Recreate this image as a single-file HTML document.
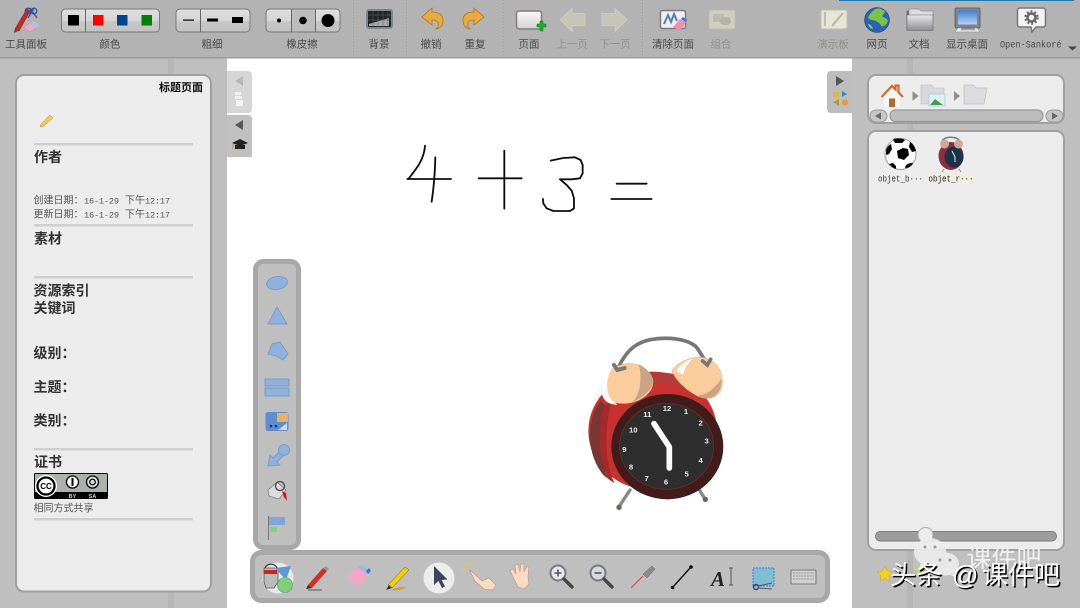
<!DOCTYPE html>
<html><head><meta charset="utf-8"><style>
html,body{margin:0;padding:0;background:#bfbfbf;width:1080px;height:608px;overflow:hidden}
svg{display:block}
text{font-family:"Liberation Sans","WenQuanYi Zen Hei","Noto Sans CJK SC",sans-serif}
.l{font-size:10.5px;fill:#4a4a4a;text-anchor:middle}
.d{font-size:10.5px;fill:#8f8f8a;text-anchor:middle}
.h{font-size:14px;fill:#333;font-weight:bold}
.s{font-size:10px;fill:#555}
.m{font-family:"Liberation Mono",monospace;font-size:8.6px;fill:#555}
.sep{stroke:#999;stroke-width:1;stroke-dasharray:1 2}
.hr{fill:#cfcfcf}
.b{fill:#8fb2dd;stroke:#7a9cc8;stroke-width:1}
</style></head><body>
<svg width="1080" height="608" viewBox="0 0 1080 608" xmlns="http://www.w3.org/2000/svg">
<defs>
<linearGradient id="btn" x1="0" y1="0" x2="0" y2="1"><stop offset="0" stop-color="#dedede"/><stop offset=".5" stop-color="#d6d6d6"/><stop offset=".55" stop-color="#c6c6c6"/><stop offset="1" stop-color="#c2c2c2"/></linearGradient>
<linearGradient id="pg" x1="0" y1="0" x2="0" y2="1"><stop offset="0" stop-color="#fbfbfb"/><stop offset="1" stop-color="#cfcfcf"/></linearGradient>
<linearGradient id="sc" x1="0" y1="0" x2="0" y2="1"><stop offset="0" stop-color="#3f7fd0"/><stop offset="1" stop-color="#b5d4f2"/></linearGradient>
<linearGradient id="fo" x1="0" y1="0" x2="0" y2="1"><stop offset="0" stop-color="#e8e8e8"/><stop offset="1" stop-color="#8c8c94"/></linearGradient>
<filter id="soft" filterUnits="userSpaceOnUse" x="0" y="0" width="1080" height="608"><feGaussianBlur stdDeviation=".38"/></filter>
</defs>

<g filter="url(#soft)">
<rect width="1080" height="608" fill="#bfbfbf"/>
<rect x="168" y="58" width="6" height="17" fill="#b6b6b6"/><rect x="168" y="592" width="6" height="16" fill="#b6b6b6"/>
<rect x="907" y="58" width="6" height="17" fill="#b6b6b6"/><rect x="907" y="123" width="6" height="8" fill="#b6b6b6"/><rect x="907" y="550" width="6" height="58" fill="#b6b6b6"/>

<!-- canvas -->
<rect x="227" y="58" width="625" height="550" fill="#fff"/>

<!-- toolbar -->
<rect width="1080" height="57" fill="#b3b3b3"/>
<rect y="57" width="1080" height="1.5" fill="#9c9c9c"/>
<rect x="839" y="0" width="235" height="1" fill="#1f78a8"/>
<path class="sep" d="M353.500 0V57M406.500 0V57M503 0V57M642.500 0V57"/>

<!-- tool panel icon -->
<path d="M15 29L27 9l3 2-11 20z" fill="#c62b2b" stroke="#7a2020" stroke-width=".6"/>
<path d="M15 29l-1 4 4-2z" fill="#444"/>
<path d="M28 18L34 8M37 18L30 8" stroke="#3a5a9a" stroke-width="1.500" fill="none"/>
<circle cx="28" cy="11" r="2.800" fill="none" stroke="#2f55a0" stroke-width="1.300"/><circle cx="34" cy="11" r="2.800" fill="none" stroke="#2f55a0" stroke-width="1.300"/>
<path d="M24 27l10-6 6 4-10 7z" fill="#eeaacb" stroke="#b98" stroke-width=".5"/>
<path d="M30 23.500l4-2.500 6 4-4 3z" fill="#a9c6df"/>
<text x="26" y="47.500" class="l">工具面板</text>

<!-- colour -->
<rect x="61.500" y="9" width="98" height="23" rx="4" fill="url(#btn)" stroke="#777" stroke-width="1"/>
<path d="M85.500 9V32" stroke="#666"/>
<rect x="68" y="15" width="11" height="10.500" fill="#000"/><rect x="93" y="15" width="10.500" height="10.500" fill="#f00"/><rect x="117" y="15" width="10.500" height="10.500" fill="#004490"/><rect x="141.500" y="15" width="10.500" height="10.500" fill="#008000"/>
<text x="110" y="47.500" class="l">颜色</text>

<!-- line -->
<rect x="176" y="9" width="74" height="23" rx="4" fill="url(#btn)" stroke="#777"/>
<path d="M200.500 9V32" stroke="#666"/>
<rect x="183" y="19.500" width="11" height="1.200" fill="#000"/><rect x="207" y="18.500" width="11" height="3" fill="#000"/><rect x="232" y="17" width="11" height="6" fill="#000"/>
<text x="212" y="47.500" class="l">粗细</text>

<!-- eraser -->
<rect x="266" y="9" width="74" height="23" rx="4" fill="url(#btn)" stroke="#777"/>
<rect x="292" y="9.500" width="23" height="22" fill="#bcbcbc"/>
<path d="M291.500 9V32M315.500 9V32" stroke="#666"/>
<circle cx="279" cy="20.500" r="2" fill="#000"/><circle cx="303" cy="20.500" r="3.800" fill="#000"/><circle cx="328" cy="20.500" r="6.500" fill="#000"/>
<text x="302" y="47.500" class="l">橡皮擦</text>

<!-- background -->
<rect x="367" y="10" width="25" height="18" rx="2" fill="#222" stroke="#7d8590" stroke-width="2"/>
<path d="M369 24l20-6v8h-20z" fill="#aaa"/>
<path d="M373 11v16M378 11v16M383 11v16M388 11v16M368 15h23M368 20h23" stroke="#666" stroke-width=".5"/>
<text x="379" y="47.500" class="l">背景</text>

<!-- undo / redo -->
<g fill="#e8a93c" stroke="#a87820" stroke-width=".8">
<path d="M432 8l-10 9 10 8v-5c5 0 7 2 6 7l-2 2c6-1 7-5 7-9 0-5-4-8-11-8z"/>
<path d="M474 8l10 9-10 8v-5c-5 0-7 2-6 7l2 2c-6-1-7-5-7-9 0-5 4-8 11-8z"/>
</g>
<text x="431" y="47.500" class="l">撤销</text><text x="475" y="47.500" class="l">重复</text>

<!-- page -->
<rect x="516.500" y="11" width="25" height="18" rx="2.500" fill="url(#pg)" stroke="#857a80" stroke-width="1.500"/>
<path d="M537 24h3v-3h3v3h3v3h-3v4h-3v-4h-3z" fill="#1fae2c" stroke="#0f7a18" stroke-width=".5"/>
<text x="529" y="47.500" class="l">页面</text>
<path d="M560 19.500l12-11v5h13v12h-13v6z" fill="#c6c6b8" stroke="#cfcfc4" stroke-width=".8"/>
<path d="M627 19.500l-12-11v5h-13v12h13v6z" fill="#c6c6b8" stroke="#cfcfc4" stroke-width=".8"/>
<text x="572" y="47.500" class="d">上一页</text><text x="615" y="47.500" class="d">下一页</text>

<!-- clear -->
<rect x="660.500" y="10.500" width="25" height="18" rx="2" fill="#eef0f6" stroke="#7d7a80" stroke-width="1.500"/>
<path d="M664 24l4-9 3 7 3-8 3 7" fill="none" stroke="#5a7ab5" stroke-width="2"/>
<path d="M673 27l7-8 6 3-6 9z" fill="#ee8fb8"/><path d="M681 19l2-2 4 3-1 2z" fill="#3f6fd0"/>
<text x="673" y="47.500" class="l">清除页面</text>

<!-- group -->
<rect x="709" y="10" width="26" height="19" rx="2" fill="#cfcfc0" stroke="#bdbdb0"/>
<rect x="713" y="14" width="11" height="8" rx="1" fill="#bcbcae"/><rect x="720" y="17" width="11" height="8" rx="4" fill="#b4b4a6"/>
<text x="721" y="47.500" class="d">组合</text>

<!-- presentation board -->
<rect x="821" y="10" width="26" height="19" rx="2" fill="#e6e6d6" stroke="#c0c0ae"/>
<path d="M825 12v14" stroke="#bbb" stroke-width="2"/><path d="M832 26l11-13" stroke="#b5b5a8" stroke-width="2"/>
<text x="833" y="47.500" class="d">演示板</text>

<!-- globe -->
<circle cx="877" cy="20" r="12.500" fill="#2a62b8" stroke="#1a3a70" stroke-width=".5"/>
<path d="M874 10c4-3 9-1 11 2l-3 4c2 2 5 2 6 5-1 3-4 6-7 5 0-3-3-3-5-5-3-1-6-1-8-3 1-3 3-6 6-8z" fill="#7cc344"/>
<path d="M868 24c2 0 4 2 5 5-2 0-4-2-5-5z" fill="#9ad060"/>
<text x="877" y="47.500" class="l">网页</text>

<!-- folder -->
<path d="M907 11h10l2 2h13v17h-25z" fill="#777" stroke="#555" stroke-width=".6"/>
<path d="M909 9h10l2 2h12v6h-24z" fill="#dcdcdc" stroke="#777" stroke-width=".5"/>
<path d="M907 15h26v15.500h-26z" fill="url(#fo)" stroke="#666" stroke-width=".6"/>
<text x="919" y="47.500" class="l">文档</text>

<!-- desktop -->
<rect x="955" y="8" width="25" height="20" rx="1.500" fill="#7a8490" stroke="#666"/>
<rect x="958" y="10.500" width="19" height="14" fill="url(#sc)"/>
<path d="M958 28l-3 4h25l-3-4h-3l1 2h-14l1-2z" fill="#e8e8e8" stroke="#888" stroke-width=".5"/>
<text x="967" y="47.500" class="l">显示桌面</text>

<!-- open sankore -->
<path d="M1020 8h23a2.500 2.500 0 0 1 2.500 2.500v14a2.500 2.500 0 0 1-2.500 2.500h-7l-4 5-1-5h-11a2.500 2.500 0 0 1-2.500-2.500v-14a2.500 2.500 0 0 1 2.500-2.500z" fill="#f4f4f4" stroke="#777" stroke-width="1.500"/>
<circle cx="1031.500" cy="17.500" r="4" fill="none" stroke="#666" stroke-width="2.500"/>
<circle cx="1031.500" cy="17.500" r="6.200" fill="none" stroke="#666" stroke-width="2" stroke-dasharray="2 2"/>
<text x="1000" y="47.500" textLength="61.500" lengthAdjust="spacingAndGlyphs" style="font-family:'Liberation Mono',monospace;font-size:10px;fill:#4a4a4a">Open-Sankoré</text>
<path d="M1068 46.500h9l-4.500 4z" fill="#444"/>

<!-- left panel -->
<rect x="16" y="75" width="195" height="516.500" rx="8" fill="#ececec" stroke="#a0a0a0" stroke-width="2"/>
<text x="203" y="91" text-anchor="end" style="font-size:11px;font-weight:bold;fill:#111">标题页面</text>
<path d="M40 127l1-3 9-9 3 3-9 8z" fill="#efc65a" stroke="#c99a30" stroke-width=".5"/>
<rect class="hr" x="34" y="143" width="159" height="2.500"/>
<text x="34" y="162" class="h">作者</text>
<text x="33.500" y="203.500" class="s">创建日期：</text><text x="84" y="203.500" class="m" textLength="35">16-1-29</text><text x="125" y="203.500" class="s">下午</text><text x="145" y="203.500" class="m" textLength="25">12:17</text>
<text x="33.500" y="217.500" class="s">更新日期：</text><text x="84" y="217.500" class="m" textLength="35">16-1-29</text><text x="125" y="217.500" class="s">下午</text><text x="145" y="217.500" class="m" textLength="25">12:17</text>
<rect class="hr" x="34" y="224" width="159" height="2.500"/>
<text x="34" y="243.500" class="h">素材</text>
<rect class="hr" x="34" y="276" width="159" height="2.500"/>
<text x="33.500" y="295.500" class="h">资源索引</text>
<text x="33.500" y="313" class="h">关键词</text>
<text x="33.500" y="358" class="h">级别：</text>
<text x="33.500" y="392" class="h">主题：</text>
<text x="33.500" y="425.500" class="h">类别：</text>
<rect class="hr" x="34" y="448" width="159" height="2.500"/>
<text x="34" y="467" class="h">证书</text>
<rect x="34" y="473" width="74" height="26" rx="1.500" fill="#000"/>
<rect x="35" y="474" width="72" height="18" fill="#aab2ab"/>
<circle cx="46" cy="486" r="11" fill="#fff"/><circle cx="46" cy="486" r="8.500" fill="#fff" stroke="#000" stroke-width="2.300"/>
<text x="46" y="489" text-anchor="middle" style="font-size:8px;font-weight:bold;fill:#000">CC</text>
<circle cx="72.500" cy="482" r="6" fill="#fff" stroke="#000" stroke-width="1.300"/><path d="M72.500 478v8" stroke="#000" stroke-width="2"/>
<circle cx="92.500" cy="482" r="6" fill="#ddd" stroke="#000" stroke-width="1.300"/><circle cx="92.500" cy="482" r="2.800" fill="none" stroke="#000" stroke-width="1.200"/>
<text x="72.500" y="498" text-anchor="middle" style="font-size:5.500px;fill:#ccc;font-weight:bold">BY</text>
<text x="92.500" y="498" text-anchor="middle" style="font-size:5.500px;fill:#ccc;font-weight:bold">SA</text>
<text x="33.500" y="511.500" class="s" style="font-size:10px">相同方式共享</text>
<rect class="hr" x="34" y="518" width="159" height="2.500"/>

<!-- side tabs -->
<path d="M227 71h21a4 4 0 0 1 4 4v34a4 4 0 0 1-4 4h-21z" fill="#d6d6d6"/>
<path d="M235 81l8-5v10z" fill="#b8b8b8"/>
<rect x="235" y="92" width="6" height="3" fill="#efefef"/><rect x="235" y="96" width="7" height="3" fill="#efefef"/><rect x="236" y="100" width="7" height="6" fill="#f5f5f5"/>
<path d="M227 115h21a4 4 0 0 1 4 4v38h-25z" fill="#c0c0c0"/>
<path d="M235 125l8-5v10z" fill="#555"/>
<path d="M232 143l8-4 8 4-8 3z" fill="#222"/><path d="M235 145v4h10v-4z" fill="#222"/><path d="M233 144v5" stroke="#c89a20"/>

<path d="M852 71h-21a4 4 0 0 0-4 4v34a4 4 0 0 0 4 4h21z" fill="#bdbdbd"/>
<path d="M836 76l8 5-8 5z" fill="#555"/>
<rect x="833" y="92" width="6" height="5" fill="#e6b530"/><path d="M842 91l5 3-5 3z" fill="#2a8fc0"/>
<path d="M833 102l6-3v7z" fill="#a9a030"/><circle cx="845" cy="102.500" r="3" fill="#e89a30"/>

<!-- right panels -->
<rect x="868" y="75" width="196" height="48" rx="8" fill="#ececec" stroke="#a0a0a0" stroke-width="2"/>
<path d="M884 95l8-8 8 8v12h-16z" fill="#f6f6f6"/>
<rect x="889" y="98.500" width="6" height="8.500" fill="#b06a35"/>
<path d="M881.500 97l10.500-11 3.500 3.500v-4h3v7l4.500 4.500" fill="none" stroke="#d9692a" stroke-width="2.200"/>
<path d="M912.500 91l6 5-6 5z" fill="#8f8f8f"/>
<path d="M921 85h10l3 3h10v16h-23z" fill="#d8d8dc" stroke="#bbb" stroke-width=".6"/>
<rect x="929" y="94" width="16" height="12" fill="#dff0f5" stroke="#a6cfdc" stroke-width=".8"/><path d="M930 105l5-6 4 3 4 3z" fill="#4c9a50"/>
<path d="M954 91l6 5-6 5z" fill="#8f8f8f"/>
<path d="M964 85h9l3 3h11l-3 16h-20z" fill="#dcdce0" stroke="#bbb" stroke-width=".7"/>
<rect x="870" y="110" width="17" height="12" rx="6" fill="#c6c6c6" stroke="#999"/><path d="M875 116l6-3.500v7z" fill="#666"/>
<rect x="890" y="110" width="153" height="11.500" rx="5.500" fill="#bdbdbd" stroke="#999" stroke-width="1.200"/>
<rect x="1046" y="110" width="17" height="12" rx="6" fill="#c6c6c6" stroke="#999"/><path d="M1058 116l-6-3.500v7z" fill="#666"/>

<rect x="868" y="131" width="196" height="419" rx="8" fill="#ececec" stroke="#a0a0a0" stroke-width="2"/>

<!-- soccer -->
<circle cx="900.500" cy="154" r="15.500" fill="#fff" stroke="#888" stroke-width=".8"/>
<path d="M903 148l-6 3 1 7 6 2 5-5-1-6z" fill="#000"/>
<path d="M886 150c1-3 3-5 5-6l1 5-3 5-3 1z" fill="#000"/><path d="M893 139c4-1 9-1 12 1l-3 3h-7z" fill="#000"/><path d="M910 142c3 2 5 5 6 9l-4 1-3-5z" fill="#000"/><path d="M889 164l4-1 3 3v3c-3-1-5-3-7-5z" fill="#000"/><path d="M905 168l1-3 4-2 3 0c-1 3-4 5-8 5z" fill="#000"/>
<!-- small clock -->
<path d="M942 141c3-5 14-5 18 0" fill="none" stroke="#777" stroke-width="1.400"/>
<path d="M944 169l-2 3M959 169l2 3" stroke="#888" stroke-width="1"/>
<ellipse cx="951" cy="156" rx="12.500" ry="14" fill="#8e2f3c"/>
<ellipse cx="954" cy="157" rx="9.500" ry="10.500" fill="#1e3048"/>
<circle cx="944.500" cy="144" r="4.500" fill="#cda99a"/><circle cx="958.500" cy="144" r="4.500" fill="#cda99a"/>
<path d="M952 151l3 6v5" fill="none" stroke="#cfe" stroke-width="1"/>
<text x="878" y="181.500" textLength="45" lengthAdjust="spacingAndGlyphs" style="font-family:'Liberation Mono',monospace;font-size:9px;fill:#333">objet_b···</text>
<rect x="926" y="173" width="49" height="11" fill="#f0efdf"/>
<text x="928.500" y="181.500" textLength="45" lengthAdjust="spacingAndGlyphs" style="font-family:'Liberation Mono',monospace;font-size:9px;fill:#222">objet_r···</text>

<!-- slider -->
<rect x="875.500" y="531.500" width="181" height="9.500" rx="4.700" fill="#9d9d9d" stroke="#7e7e7e"/>
<circle cx="925.500" cy="535" r="7.500" fill="#ececec" stroke="#aaa"/>

<!-- handwriting -->
<g transform="translate(390 130) scale(.3333)" fill="none" stroke="#111" stroke-width="5.500" stroke-linecap="round" stroke-linejoin="round">
<path d="M105 47C102 90 80 115 55 147M52 147H183M136 82C135 130 131 175 125 215"/>
<path d="M266 145H395M343 62V236"/>
<path d="M482 92L520 84 555 82 572 90 578 105 578 130 570 145 545 148 510 148 530 165 545 182 552 205 552 235 540 243 490 243 470 235 460 220 459 207"/>
<path d="M680 161H770M664 207H785"/>
</g>

<!-- big clock -->
<g transform="translate(570 325) scale(.3333)">
<path d="M180 495l-33 50" stroke="#8a8a80" stroke-width="10" stroke-linecap="round"/><path d="M382 485l25 40" stroke="#8a8a80" stroke-width="10" stroke-linecap="round"/>
<circle cx="147" cy="547" r="8" fill="#666"/><circle cx="406" cy="523" r="8" fill="#666"/>
<ellipse cx="248" cy="318" rx="193" ry="178" fill="#c8302f"/>
<path d="M92 228C50 280 45 380 100 450l15 12C80 380 85 300 105 240z" fill="#7a3535"/>
<path d="M105 240C85 300 80 380 115 462l18 12C100 400 105 300 125 230z" fill="#a52a2a"/>
<path d="M200 150c50-12 120-12 170 18l-20 22c-50-22-110-22-150-12z" fill="#b03a3a"/>
<ellipse cx="292" cy="365" rx="168" ry="158" fill="#431c1c"/>
<ellipse cx="290" cy="364" rx="141" ry="129" fill="#2f2f2f" stroke="#7a3020" stroke-width="2"/>
<path d="M145 128C165 85 190 55 240 44 290 35 350 40 378 65 395 85 400 105 412 112" fill="none" stroke="#777" stroke-width="11" stroke-linecap="round"/>
<path d="M94 195c-2-40 30-70 70-78 40-8 78 17 85 50 3 25-20 55-65 66-40 8-86-3-90-38z" fill="#fccd9c" stroke="#e8a878" stroke-width="1.500"/>
<path d="M205 117c28 15 48 35 44 58-4 14-22 40-62 56 26-25 30-80 18-114z" fill="#c9a585"/>
<path d="M128 128c-18 25-25 68-4 96l18 15c-30 0-48-15-48-48 0-25 14-52 34-63z" fill="#fff"/>
<path d="M306 138c12-26 60-46 95-40 35 6 55 35 56 70 1 30-15 55-50 52-30-3-84-40-101-82z" fill="#fccd9c" stroke="#e8a878" stroke-width="1.500"/>
<path d="M455 160c2 30-14 62-48 60-10 0-20-4-30-8 30 0 55-18 78-52z" fill="#c9a585"/>
<path d="M318 138c15-20 30-32 50-38-15 15-25 30-28 50z" fill="#fff"/>
<path d="M132 120l10 15 22-6" fill="none" stroke="#777" stroke-width="12" stroke-linecap="round"/>
<path d="M398 108l14 12 10-17" fill="none" stroke="#777" stroke-width="11" stroke-linecap="round"/>
<path d="M252 296l46 70v63" fill="none" stroke="#fff" stroke-width="17" stroke-linecap="round" stroke-linejoin="round"/>
<g fill="#eee" text-anchor="middle" style="font-size:23px;font-weight:bold">
<text x="291" y="258" style="font-family:'Liberation Sans',sans-serif">12</text>
<text x="348" y="267" style="font-family:'Liberation Sans',sans-serif">1</text>
<text x="392" y="301" style="font-family:'Liberation Sans',sans-serif">2</text>
<text x="410" y="355" style="font-family:'Liberation Sans',sans-serif">3</text>
<text x="392" y="414" style="font-family:'Liberation Sans',sans-serif">4</text>
<text x="350" y="455" style="font-family:'Liberation Sans',sans-serif">5</text>
<text x="288" y="478" style="font-family:'Liberation Sans',sans-serif">6</text>
<text x="230" y="468" style="font-family:'Liberation Sans',sans-serif">7</text>
<text x="183" y="434" style="font-family:'Liberation Sans',sans-serif">8</text>
<text x="163" y="381" style="font-family:'Liberation Sans',sans-serif">9</text>
<text x="190" y="322" style="font-family:'Liberation Sans',sans-serif">10</text>
<text x="232" y="276" style="font-family:'Liberation Sans',sans-serif">11</text>
</g>
</g>

<!-- left vertical toolbar -->
<rect x="255.500" y="261.500" width="43" height="286" rx="8" fill="#bfbfbf" stroke="#a8a8a8" stroke-width="5"/>
<ellipse cx="277" cy="283" rx="10.500" ry="6.500" transform="rotate(-10 277 283)" class="b"/>
<path d="M277 307l-9 17h19z" class="b"/>
<path d="M272 344l8-2 8 12-5 6-7-4-8-2z" class="b"/>
<rect x="265" y="379" width="24" height="7" class="b"/><rect x="265" y="388" width="24" height="8" class="b"/>
<rect x="265.500" y="412" width="23" height="19" rx="2.500" fill="#5c8ed0"/><rect x="277" y="413" width="11" height="9" fill="#e8b060"/><path d="M278 430l9-7v7z" fill="#cde"/><circle cx="271" cy="426" r="1.300" fill="#234"/><circle cx="276" cy="426" r="1.300" fill="#234"/>
<path d="M268 466l2-11 3 3 6-6 4 4-6 6 3 3z" class="b"/><circle cx="284" cy="450" r="5.500" class="b"/>
<path d="M268 490l9-8 9 8-7 9-10-3z" fill="#ddd" stroke="#666" stroke-width=".6"/><circle cx="280" cy="486" r="4.500" fill="none" stroke="#555" stroke-width="1.500"/><path d="M282 491l4 2 1 8-3-4z" fill="#d11"/>
<path d="M268.500 516v24" stroke="#777"/><rect x="269" y="517" width="16" height="8" fill="#7fa6d8"/><rect x="270" y="527" width="7" height="5" fill="#7dd47d"/>

<!-- bottom toolbar -->
<rect x="252.500" y="552.500" width="575" height="48" rx="9" fill="#bfbfbf" stroke="#a8a8a8" stroke-width="5"/>
<circle cx="278" cy="578" r="15.500" fill="#e8e8e8"/>
<path d="M264 568h14v14l-4 6h-8l-2-6z" fill="#bbb" stroke="#555" stroke-width=".8"/><rect x="264" y="570" width="13" height="4" fill="#c22"/>
<path d="M265 568c2-5 10-5 12 0" fill="none" stroke="#444" stroke-width="1.200"/>
<path d="M275 568l16-2-5 14z" fill="#5a9ad8"/>
<circle cx="285" cy="585" r="7.500" fill="#7fcf78" stroke="#6a8" stroke-width=".8"/>
<path d="M308 585l15-17 4 3-15 17z" fill="#c32"/><path d="M323 568l3-2 3 3-2 2z" fill="#999"/><path d="M306 589l2-4 4 3z" fill="#333"/><path d="M308 590h14" stroke="#666" stroke-width="1.200"/>
<path d="M346 578l11-11 13 7-11 12z" fill="#f4a6c8"/><path d="M357 567l3-2 10 6-1 4z" fill="#9bb8dc"/><path d="M366 571l3-3 2 3-3 3z" fill="#3f6fd0"/>
<path d="M388 585l17-18 4 3-17 18z" fill="#f5d000" stroke="#555" stroke-width=".5"/><path d="M386 590l3-5 3 3z" fill="#333"/><path d="M392 589c4-1 10-3 14-2-2 3-10 4-14 3z" fill="#d8a030"/>
<circle cx="439" cy="578" r="15.500" fill="#ededed"/>
<path d="M434 566l0 19 4.500-4 3.500 7 3-1.500-3.500-6.500 6-.5z" fill="#3a4560"/>
<path d="M470 570l12 11 7-3 7 7-3 5-9-1-9-8-5-10z" fill="#fbdcc0" stroke="#b99" stroke-width=".7"/>
<path d="M464 565l3 2M468 562v3M461 570h4M473 564l-2 3" stroke="#e8d020" stroke-width="1"/>
<path d="M513 577l-3-7 3-1 3 5-1-9 3-1 2 8 1-8 3 0 0 8 3-6 2 1-1 10 1 7-5 5-6-2z" fill="#fbdcc0" stroke="#b99" stroke-width=".7"/>
<circle cx="558" cy="573" r="7.500" fill="#e6e6ee" stroke="#778" stroke-width="2"/><path d="M558 569.500v7M554.500 573h7" stroke="#555" stroke-width="1.600"/><path d="M564 579l8 8" stroke="#444" stroke-width="3.400" stroke-linecap="round"/>
<circle cx="598" cy="573" r="7.500" fill="#d8d8e0" stroke="#778" stroke-width="2"/><path d="M594.500 573h7" stroke="#555" stroke-width="1.600"/><path d="M604 579l8 8" stroke="#444" stroke-width="3.400" stroke-linecap="round"/>
<path d="M643 574l9-8 3 3-8 9z" fill="#8a8a8a" stroke="#666" stroke-width=".5"/><path d="M631 588l12-12" stroke="#e04a4a" stroke-width="1.200"/>
<path d="M672.500 587.500l18-20" stroke="#111" stroke-width="1.400"/><circle cx="672.500" cy="587.500" r="1.800" fill="#111"/><circle cx="691" cy="567" r="1.800" fill="#111"/>
<rect x="753" y="568" width="21" height="18" fill="#7fbdd0" stroke="#3a7ad0" stroke-dasharray="2 1"/>
<circle cx="756" cy="587" r="2.500" fill="none" stroke="#224a90" stroke-width="1.500"/><path d="M758 586l14-3M758 588l14 1" stroke="#556" stroke-width="1"/>
<rect x="791" y="570" width="25" height="14" rx="1" fill="#d0d0d0" stroke="#777"/><path d="M793 573h21M793 576h21M793 579h21" stroke="#999" stroke-dasharray="2 .8"/>
<text x="711" y="586" style="font-family:'Liberation Serif',serif;font-style:italic;font-weight:bold;font-size:21px;fill:#222">A</text>
<path d="M729 568h4M731 568v17M729 585h4" stroke="#555" fill="none"/>

<!-- star + plus under watermark -->
<path d="M885 566l2.500 5 5.500.8-4 3.800 1 5.400-5-2.600-5 2.600 1-5.400-4-3.800 5.500-.8z" fill="#f5d020" stroke="#c9a020" stroke-width=".5"/>
<path d="M915 568h3v-3h3v3h3v3h-3v3h-3v-3h-3z" fill="#b8d860"/>
</g>

<!-- watermark -->
<g fill="#ededed" opacity=".9">
<ellipse cx="930" cy="552" rx="16" ry="14"/><path d="M921 563l-2 6 7-3z"/>
<ellipse cx="945" cy="564" rx="14" ry="11.500"/><path d="M954 573l3 5-7-3z"/>
</g>
<circle cx="925" cy="547" r="1.500" fill="#999"/><circle cx="935" cy="547" r="1.500" fill="#999"/><circle cx="940" cy="560" r="1.500" fill="#999"/><circle cx="950" cy="560" r="1.500" fill="#999"/>
<text x="966.500" y="567" style="font-size:25px;fill:#f0f0f0">课件吧</text>
<text x="891.500" y="585.500" style="font-size:26px;fill:#000">头条</text>
<text x="953.500" y="585.500" style="font-size:26px;fill:#000">@</text>
<text x="983.500" y="585.500" style="font-size:26px;fill:#000">课件吧</text>
<text x="890" y="584" style="font-size:26px;fill:#fff">头条</text>
<text x="952" y="584" style="font-size:26px;fill:#fff">@</text>
<text x="982" y="584" style="font-size:26px;fill:#fff">课件吧</text>
</svg>
</body></html>
